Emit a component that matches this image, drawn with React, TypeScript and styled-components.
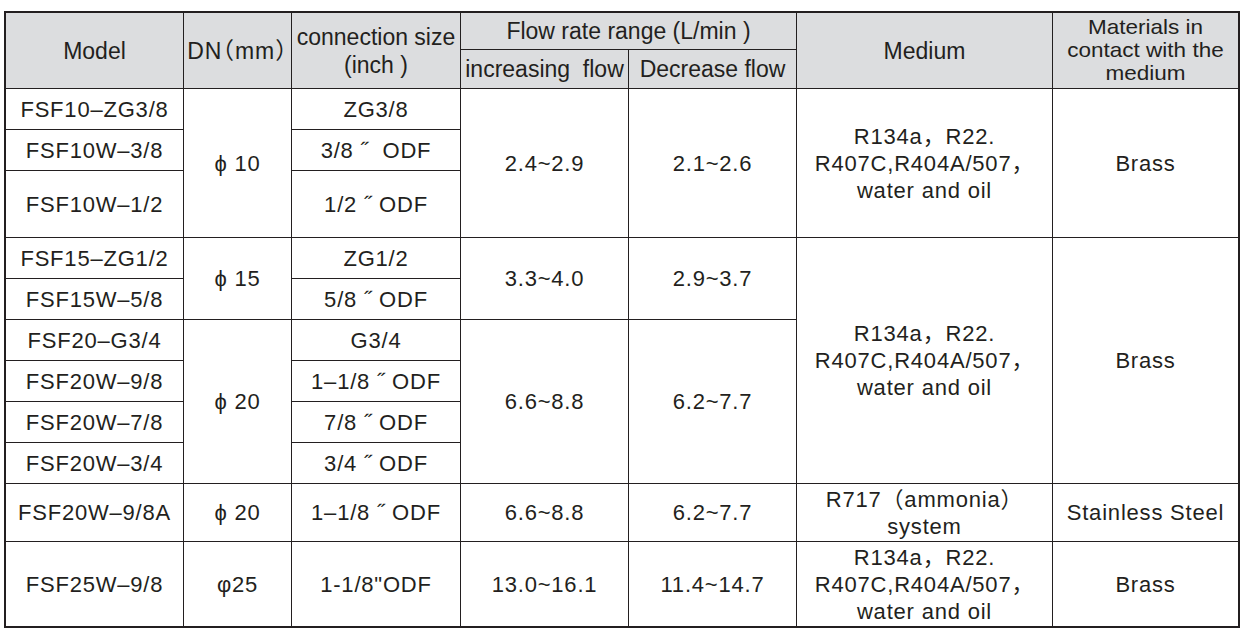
import React from 'react';
import styled, { createGlobalStyle } from 'styled-components';

const GlobalStyle = createGlobalStyle`
  html, body {
    margin: 0;
    padding: 0;
    background: #ffffff;
  }
  body {
    font-family: "Liberation Sans", Arial, "Noto Sans CJK SC", sans-serif;
    color: #231f20;
  }
`;

const Page = styled.div`
  padding: 11px 0 0 4px;
`;

// lines are the 1px gaps showing the dark grid background through
const SpecGrid = styled.div`
  display: grid;
  grid-template-columns: 177px 107px 168px 167px 167px 255px 185px;
  grid-template-rows: 36px 38px 40px 40px 66px 40px 40px 40px 40px 40px 40px 57px 84px;
  gap: 1px;
  width: max-content;
  background: #231f20;
  border: 2px solid #231f20;
`;

interface CellProps {
  $col: number;
  $row: number;
  $colSpan?: number;
  $rowSpan?: number;
}

const Cell = styled.div<CellProps>`
  grid-column: ${(p) => p.$col} / span ${(p) => p.$colSpan ?? 1};
  grid-row: ${(p) => p.$row} / span ${(p) => p.$rowSpan ?? 1};
  display: flex;
  align-items: center;
  justify-content: center;
  text-align: center;
  white-space: pre;
  font-size: 22px;
  background: #ffffff;
  letter-spacing: 0.8px;
  line-height: 27px;
`;

const HeadCell = styled(Cell)`
  background: #dcdddf;
  font-size: 23px;
  letter-spacing: 0;
  line-height: 28px;
`;

const TightHead = styled.span`
  display: inline-block;
  font-size: 22.5px;
  line-height: 25px;
  transform: scaleY(0.92);
`;

const NarrowHead = styled.span`
  font-feature-settings: 'halt';
  letter-spacing: 1px;
`;

type Row = {
  model: string;
  conn: string;
};

const rows: Row[] = [
  { model: 'FSF10–ZG3/8', conn: 'ZG3/8' },
  { model: 'FSF10W–3/8', conn: '3/8 ˝  ODF' },
  { model: 'FSF10W–1/2', conn: '1/2 ˝ ODF' },
  { model: 'FSF15–ZG1/2', conn: 'ZG1/2' },
  { model: 'FSF15W–5/8', conn: '5/8 ˝ ODF' },
  { model: 'FSF20–G3/4', conn: 'G3/4' },
  { model: 'FSF20W–9/8', conn: '1–1/8 ˝ ODF' },
  { model: 'FSF20W–7/8', conn: '7/8 ˝ ODF' },
  { model: 'FSF20W–3/4', conn: '3/4 ˝ ODF' },
  { model: 'FSF20W–9/8A', conn: '1–1/8 ˝ ODF' },
  { model: 'FSF25W–9/8', conn: '1-1/8"ODF' },
];

type Group = {
  start: number;
  span: number;
  dn: string;
  inc: string;
  dec: string;
};

const groups: Group[] = [
  { start: 0, span: 3, dn: 'ϕ 10', inc: '2.4~2.9', dec: '2.1~2.6' },
  { start: 3, span: 2, dn: 'ϕ 15', inc: '3.3~4.0', dec: '2.9~3.7' },
  { start: 5, span: 4, dn: 'ϕ 20', inc: '6.6~8.8', dec: '6.2~7.7' },
  { start: 9, span: 1, dn: 'ϕ 20', inc: '6.6~8.8', dec: '6.2~7.7' },
  { start: 10, span: 1, dn: 'φ25', inc: '13.0~16.1', dec: '11.4~14.7' },
];

const refrigerants = (
  <>
    R134a，R22.
    <br />
    R407C,R404A/507，
    <br />
    water and oil
  </>
);

const media = [
  { start: 0, span: 3, medium: refrigerants, material: 'Brass' },
  { start: 3, span: 6, medium: refrigerants, material: 'Brass' },
  {
    start: 9,
    span: 1,
    medium: (
      <>
        R717（ammonia）
        <br />
        system
      </>
    ),
    material: 'Stainless Steel',
  },
  { start: 10, span: 1, medium: refrigerants, material: 'Brass' },
];

const FIRST = 3; // first data row in the grid

const App = () => {
  return (
    <Page>
      <GlobalStyle />
      <SpecGrid>
        <HeadCell $col={1} $row={1} $rowSpan={2}>
          Model
        </HeadCell>
        <HeadCell $col={2} $row={1} $rowSpan={2}>
          <NarrowHead>DN（mm）</NarrowHead>
        </HeadCell>
        <HeadCell $col={3} $row={1} $rowSpan={2}>
          <span>
            connection size
            <br />
            (inch )
          </span>
        </HeadCell>
        <HeadCell $col={4} $row={1} $colSpan={2}>
          Flow rate range (L/min )
        </HeadCell>
        <HeadCell $col={4} $row={2}>
          increasing  flow
        </HeadCell>
        <HeadCell $col={5} $row={2}>
          Decrease flow
        </HeadCell>
        <HeadCell $col={6} $row={1} $rowSpan={2}>
          Medium
        </HeadCell>
        <HeadCell $col={7} $row={1} $rowSpan={2}>
          <TightHead>
            Materials in
            <br />
            contact with the
            <br />
            medium
          </TightHead>
        </HeadCell>

        {rows.map((r, i) => (
          <React.Fragment key={r.model}>
            <Cell $col={1} $row={FIRST + i}>
              {r.model}
            </Cell>
            <Cell $col={3} $row={FIRST + i}>
              {r.conn}
            </Cell>
          </React.Fragment>
        ))}

        {groups.map((g) => (
          <React.Fragment key={g.start}>
            <Cell $col={2} $row={FIRST + g.start} $rowSpan={g.span}>
              {g.dn}
            </Cell>
            <Cell $col={4} $row={FIRST + g.start} $rowSpan={g.span}>
              {g.inc}
            </Cell>
            <Cell $col={5} $row={FIRST + g.start} $rowSpan={g.span}>
              {g.dec}
            </Cell>
          </React.Fragment>
        ))}

        {media.map((m) => (
          <React.Fragment key={m.start}>
            <Cell $col={6} $row={FIRST + m.start} $rowSpan={m.span}>
              <span>{m.medium}</span>
            </Cell>
            <Cell $col={7} $row={FIRST + m.start} $rowSpan={m.span}>
              {m.material}
            </Cell>
          </React.Fragment>
        ))}
      </SpecGrid>
    </Page>
  );
};

export default App;
